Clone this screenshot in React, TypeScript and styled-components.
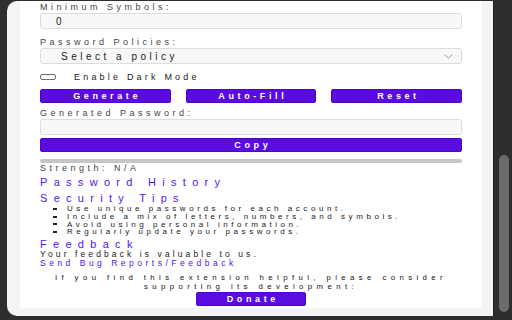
import React from 'react';
import styled, { createGlobalStyle } from 'styled-components';

const GlobalStyle = createGlobalStyle`
  html, body {
    margin: 0;
    padding: 0;
    background: #2e2e2e;
    overflow: hidden;
  }
  body {
    font-family: "Liberation Sans", Arial, sans-serif;
  }
`;

const Screen = styled.div`
  width: 512px;
  height: 320px;
  display: flex;
  align-items: flex-start;
  background: #2e2e2e;
`;

const Popup = styled.div`
  margin: 1px 0 0 7px;
  width: 487px;
  height: 315px;
  box-sizing: border-box;
  padding: 0 11px 8px 13px;
  background: #f4f4f4;
  border-radius: 10px 0 0 10px;
  border-right: 1px solid #1f1f1f;
  overflow: hidden;
  display: flex;
`;

const Card = styled.div`
  flex: 1;
  background: #ffffff;
  padding: 0 20px;
  display: flex;
  flex-direction: column;
`;

const Rail = styled.div`
  width: 18px;
  height: 320px;
  box-sizing: border-box;
  padding: 155px 3px 0 5px;
`;

const Thumb = styled.div`
  height: 157px;
  border-radius: 5px;
  background: #6b6b6b;
`;

const Label = styled.div<{ $top?: number }>`
  margin-top: ${({ $top }) => $top ?? 0}px;
  font-size: 9px;
  line-height: 10px;
  letter-spacing: 3.5px;
  color: #444;
  white-space: nowrap;
`;

const Field = styled.div<{ $top?: number }>`
  margin-top: ${({ $top }) => $top ?? 0}px;
  height: 16px;
  box-sizing: border-box;
  border: 1px solid #dcdcdc;
  border-radius: 3px;
  background: #f8f8f8;
  display: flex;
  align-items: center;
  justify-content: space-between;
  padding: 0 8px 0 ${({ children }) => (children ? 15 : 0)}px;
  font-size: 10px;
  letter-spacing: 3.5px;
  color: #1a1a1a;
  white-space: nowrap;
`;

const SelectText = styled.span`
  padding-left: 5px;
`;

const CheckRow = styled.label`
  margin-top: 8px;
  height: 10px;
  display: flex;
  align-items: center;
  gap: 18px;
  font-size: 9px;
  letter-spacing: 3.2px;
  color: #222;
  white-space: nowrap;
`;

const CheckBox = styled.span`
  width: 16px;
  height: 6px;
  box-sizing: border-box;
  border: 1px solid #6f6f6f;
  border-radius: 2px;
  background: #fff;
`;

const ButtonRow = styled.div`
  margin-top: 7px;
  display: grid;
  grid-template-columns: repeat(3, 1fr);
  gap: 15px;
`;

const Button = styled.button<{ $top?: number; $width?: number }>`
  margin-top: ${({ $top }) => $top ?? 0}px;
  width: ${({ $width }) => ($width ? `${$width}px` : 'auto')};
  align-self: ${({ $width }) => ($width ? 'center' : 'stretch')};
  height: 14px;
  padding: 0;
  border: 1px solid #4a06c2;
  border-radius: 2px;
  background: #5a0be0;
  color: #fff;
  font-family: inherit;
  font-size: 9px;
  font-weight: 700;
  letter-spacing: 3.6px;
  line-height: 12px;
  text-indent: 3.6px;
`;

const Meter = styled.div`
  margin-top: 7px;
  height: 4px;
  border-radius: 2px;
  background: #c6c6c6;
`;

const Heading = styled.div<{ $top?: number }>`
  margin-top: ${({ $top }) => $top ?? 0}px;
  font-size: 11px;
  line-height: 11px;
  letter-spacing: 6.3px;
  color: #5512ea;
  white-space: nowrap;
`;

const Tips = styled.ul`
  margin: 1px 0 0;
  padding: 0;
  list-style: none;
`;

const Tip = styled.li`
  display: flex;
  align-items: center;
  height: 7.7px;
  font-size: 8px;
  letter-spacing: 3.55px;
  color: #1a1a1a;
  white-space: nowrap;
`;

const Bullet = styled.span`
  width: 4px;
  height: 2px;
  margin: 0 10px 0 13px;
  background: #222;
`;

const Text = styled.div`
  font-size: 8.5px;
  line-height: 9px;
  letter-spacing: 3.1px;
  color: #1a1a1a;
  white-space: nowrap;
`;

const Link = styled.a`
  font-size: 8.5px;
  line-height: 9px;
  letter-spacing: 3.5px;
  color: #5512ea;
  text-decoration: none;
  white-space: nowrap;
`;

const Support = styled.div`
  margin-top: 5px;
  font-size: 7.8px;
  line-height: 9px;
  letter-spacing: 4.4px;
  color: #111;
  text-align: center;
`;

const Chevron = () => (
  <svg width="9" height="5" viewBox="0 0 9 5">
    <polyline points="0.5,0.5 4.5,4 8.5,0.5" fill="none" stroke="#9a9a9a" strokeWidth="1" />
  </svg>
);

const tips = [
  'Use unique passwords for each account.',
  'Include a mix of letters, numbers, and symbols.',
  'Avoid using personal information.',
  'Regularly update your passwords.',
];

export default function App() {
  return (
    <Screen>
      <GlobalStyle />
      <Popup>
        <Card>
          <Label $top={1}>Minimum Symbols:</Label>
          <Field $top={1}>0</Field>
          <Label $top={8}>Password Policies:</Label>
          <Field $top={1}>
            <SelectText>Select a policy</SelectText>
            <Chevron />
          </Field>
          <CheckRow>
            <CheckBox />
            Enable Dark Mode
          </CheckRow>
          <ButtonRow>
            <Button>Generate</Button>
            <Button>Auto-Fill</Button>
            <Button>Reset</Button>
          </ButtonRow>
          <Label $top={5}>Generated Password:</Label>
          <Field $top={1} />
          <Button $top={3}>Copy</Button>
          <Meter />
          <Label>Strength: N/A</Label>
          <Heading $top={4}>Password History</Heading>
          <Heading $top={5}>Security Tips</Heading>
          <Tips>
            {tips.map((t) => (
              <Tip key={t}>
                <Bullet />
                {t}
              </Tip>
            ))}
          </Tips>
          <Heading $top={3}>Feedback</Heading>
          <Text>Your feedback is valuable to us.</Text>
          <Link href="#">Send Bug Reports/Feedback</Link>
          <Support>
            If you find this extension helpful, please consider
            <br />
            supporting its development:
          </Support>
          <Button $top={1} $width={110}>Donate</Button>
        </Card>
      </Popup>
      <Rail>
        <Thumb />
      </Rail>
    </Screen>
  );
}
